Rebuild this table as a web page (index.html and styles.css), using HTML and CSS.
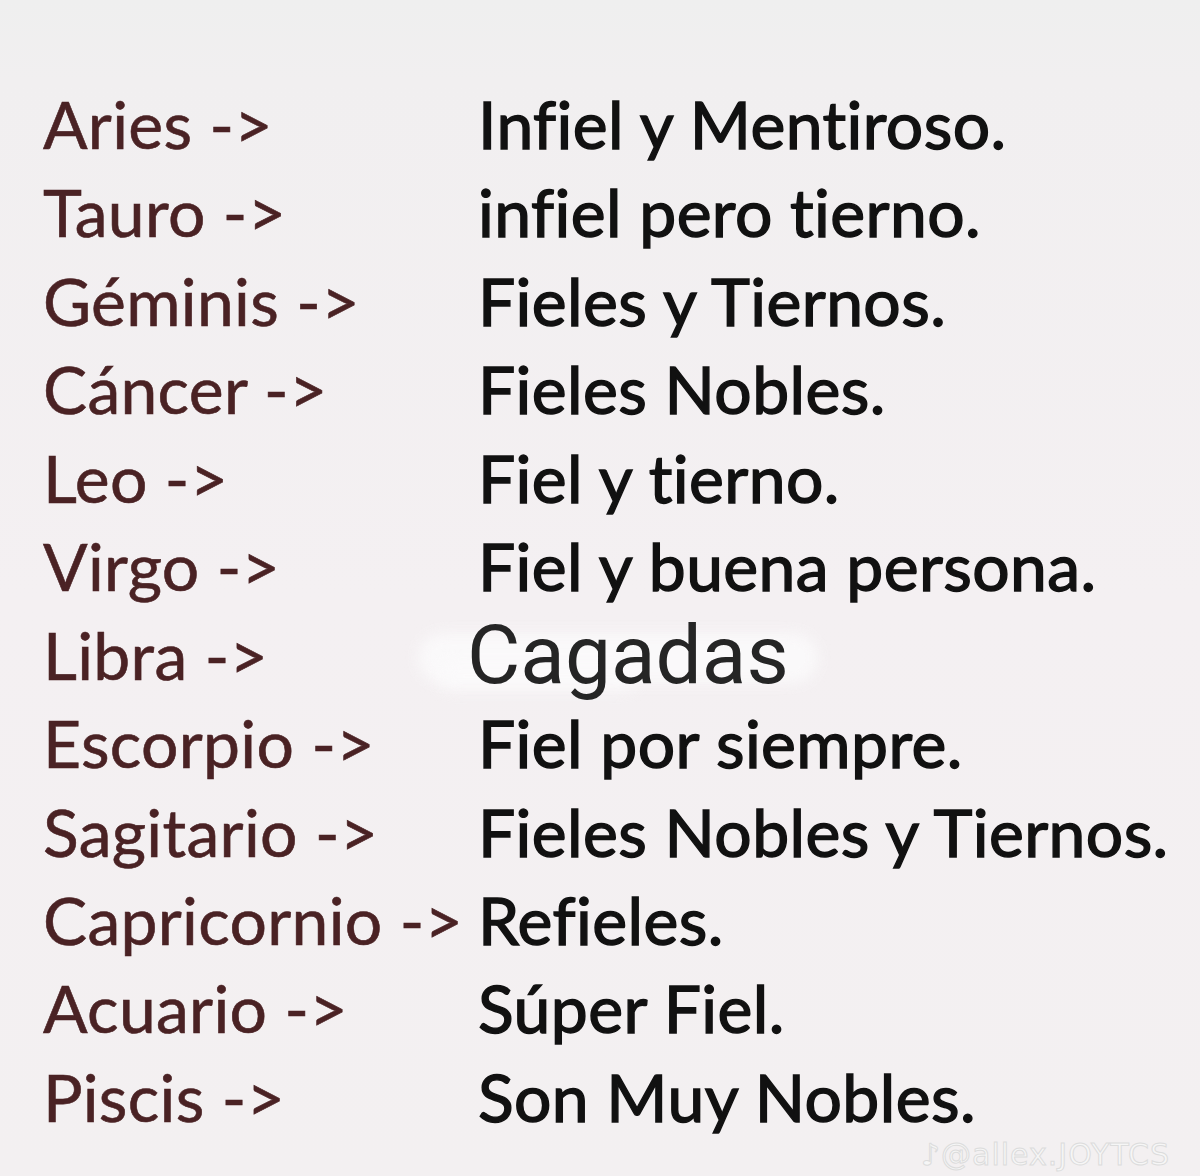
FILE: index.html
```html
<!DOCTYPE html>
<html lang="es">
<head>
<meta charset="utf-8">
<title>Signos</title>
<link rel="stylesheet" href="styles.css">
</head>
<body>
<main class="card">
  <div class="list">
    <div class="sign">Aries -&gt;</div><div class="trait">Infiel y Mentiroso.</div>
    <div class="sign">Tauro -&gt;</div><div class="trait">infiel pero tierno.</div>
    <div class="sign">Géminis -&gt;</div><div class="trait">Fieles y Tiernos.</div>
    <div class="sign">Cáncer -&gt;</div><div class="trait">Fieles Nobles.</div>
    <div class="sign">Leo -&gt;</div><div class="trait">Fiel y tierno.</div>
    <div class="sign">Virgo -&gt;</div><div class="trait">Fiel y buena persona.</div>
    <div class="sign">Libra -&gt;</div><div class="trait trait-edit"><span class="smudge"></span><span class="smudge smudge-low"></span><span class="edited">Cagadas</span></div>
    <div class="sign">Escorpio -&gt;</div><div class="trait">Fiel por siempre.</div>
    <div class="sign">Sagitario -&gt;</div><div class="trait">Fieles Nobles y Tiernos.</div>
    <div class="sign">Capricornio -&gt;</div><div class="trait">Refieles.</div>
    <div class="sign">Acuario -&gt;</div><div class="trait">Súper Fiel.</div>
    <div class="sign">Piscis -&gt;</div><div class="trait">Son Muy Nobles.</div>
  </div>
  <div class="watermark">♪@allex.JOYTCS</div>
</main>
</body>
</html>
```

FILE: styles.css
```css
html, body {
  margin: 0;
  padding: 0;
}
body {
  width: 1200px;
  height: 1176px;
  overflow: hidden;
  background: linear-gradient(180deg, #efefef 0px, #f1eff0 80px, #f4f0f2 600px, #f3f0f1 1176px);
  font-family: "Lato", "Liberation Sans", sans-serif;
}
.card {
  position: relative;
  height: 1176px;
  box-sizing: border-box;
  padding: 80px 0 0 43px;
}
.list {
  display: grid;
  grid-template-columns: 435px 1fr;
  grid-auto-rows: 88.45px;
  line-height: 88.45px;
  font-size: 66px;
}
.sign {
  color: #4a2224;
  white-space: nowrap;
  letter-spacing: 0.3px;
  -webkit-text-stroke: 0.6px #4a2224;
}
.trait {
  color: #111111;
  font-weight: 400;
  white-space: nowrap;
  letter-spacing: 0.4px;
  -webkit-text-stroke: 1.4px #111;
}
.trait-edit {
  position: relative;
  -webkit-text-stroke: 0;
}
.smudge {
  position: absolute;
  left: -60px;
  top: 22px;
  width: 400px;
  height: 50px;
  background: #fbfafb;
  border-radius: 30px;
  filter: blur(7px);
  opacity: 0.9;
}
.smudge-low {
  left: -40px;
  top: 50px;
  width: 200px;
  height: 30px;
  opacity: 0.8;
}
.edited {
  position: relative;
  font-family: "Roboto", "Liberation Sans", sans-serif;
  font-size: 82px;
  letter-spacing: 0;
  color: #252525;
  margin-left: -11px;
}
.watermark {
  position: absolute;
  right: 30px;
  bottom: 4px;
  font-family: "DejaVu Sans", sans-serif;
  font-size: 30px;
  color: #f6f6f6;
  -webkit-text-stroke: 1px #dcdcdc;
  letter-spacing: 1px;
}
```
